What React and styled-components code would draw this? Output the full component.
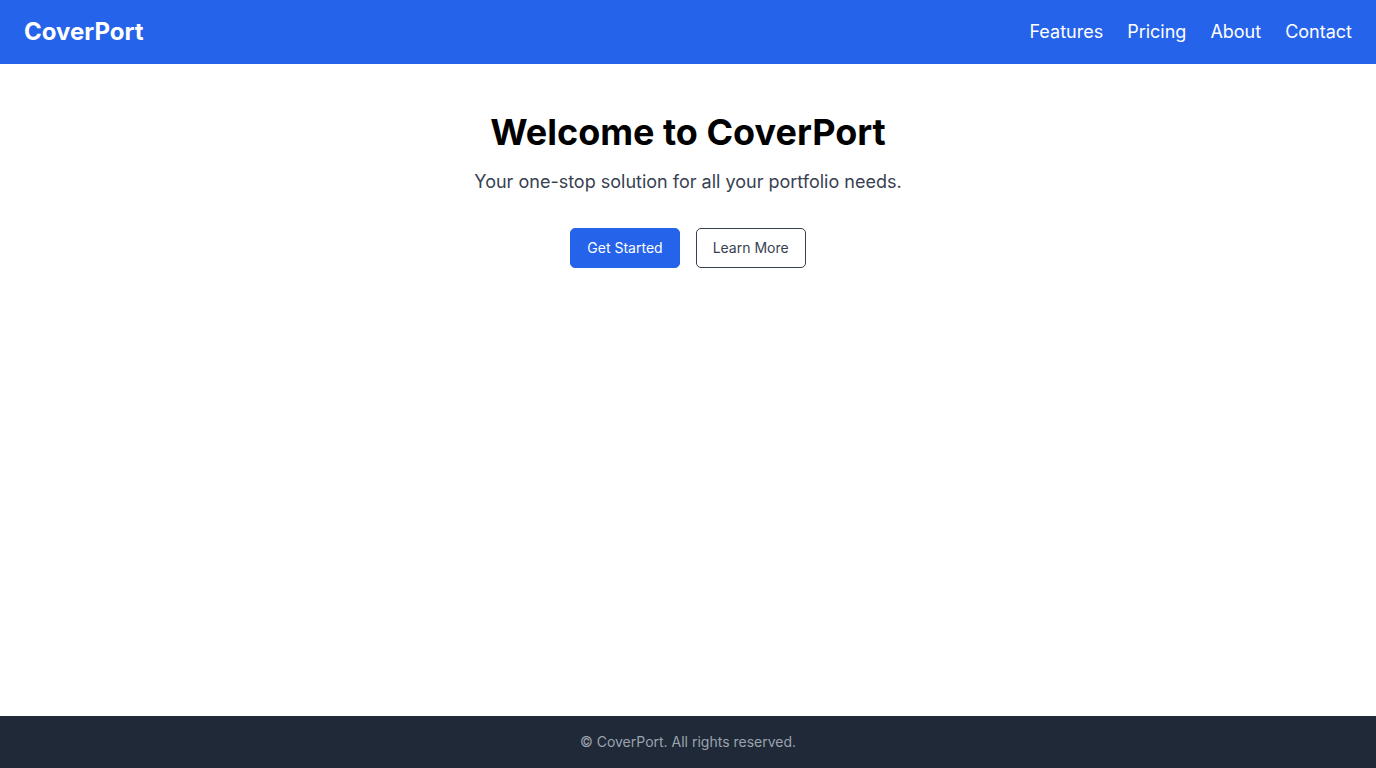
import React from 'react';
import styled, { createGlobalStyle } from 'styled-components';

const GlobalStyle = createGlobalStyle`
  * { box-sizing: border-box; }
  body {
    margin: 0;
    font-family: Inter, "Noto Sans", sans-serif;
    background: #ffffff;
  }
`;

const Page = styled.div`
  min-height: 100vh;
  display: flex;
  flex-direction: column;
`;

const Header = styled.header`
  display: flex;
  align-items: center;
  justify-content: space-between;
  height: 64px;
  padding: 0 24px;
  background-color: #2563eb;
  color: #ffffff;
`;

const Logo = styled.div`
  font-size: 24px;
  line-height: 32px;
  font-weight: 700;
`;

const Nav = styled.nav`
  display: flex;
  gap: 24px;
`;

const NavLink = styled.a`
  font-size: 18px;
  line-height: 28px;
  color: #ffffff;
  text-decoration: none;
`;

const Main = styled.main`
  flex: 1;
  display: flex;
  flex-direction: column;
  align-items: center;
  padding: 48px 24px;
`;

const Title = styled.h1`
  margin: 0;
  font-size: 36px;
  line-height: 40px;
  font-weight: 700;
  color: #000000;
`;

const Subtitle = styled.p`
  margin: 16px 0 0;
  font-size: 18px;
  line-height: 28px;
  color: #374151;
`;

const Actions = styled.div`
  display: flex;
  gap: 16px;
  margin-top: 32px;
`;

const Button = styled.button`
  font-family: inherit;
  font-size: 14px;
  line-height: 20px;
  font-weight: 400;
  padding: 9px 16px;
  white-space: nowrap;
  border-radius: 5px;
  cursor: pointer;
  border: 1px solid ${({ $primary }) => ($primary ? '#2563eb' : '#374151')};
  background-color: ${({ $primary }) => ($primary ? '#2563eb' : '#ffffff')};
  color: ${({ $primary }) => ($primary ? '#ffffff' : '#374151')};
`;

const Footer = styled.footer`
  height: 52px;
  display: flex;
  align-items: center;
  justify-content: center;
  background-color: #1f2937;
  color: #9ca3af;
  font-size: 14px;
  line-height: 20px;
`;

export default function App() {
  return (
    <Page>
      <GlobalStyle />
      <Header>
        <Logo>CoverPort</Logo>
        <Nav>
          <NavLink href="#">Features</NavLink>
          <NavLink href="#">Pricing</NavLink>
          <NavLink href="#">About</NavLink>
          <NavLink href="#">Contact</NavLink>
        </Nav>
      </Header>
      <Main>
        <Title>Welcome to CoverPort</Title>
        <Subtitle>Your one-stop solution for all your portfolio needs.</Subtitle>
        <Actions>
          <Button $primary>Get Started</Button>
          <Button>Learn More</Button>
        </Actions>
      </Main>
      <Footer>© CoverPort. All rights reserved.</Footer>
    </Page>
  );
}
